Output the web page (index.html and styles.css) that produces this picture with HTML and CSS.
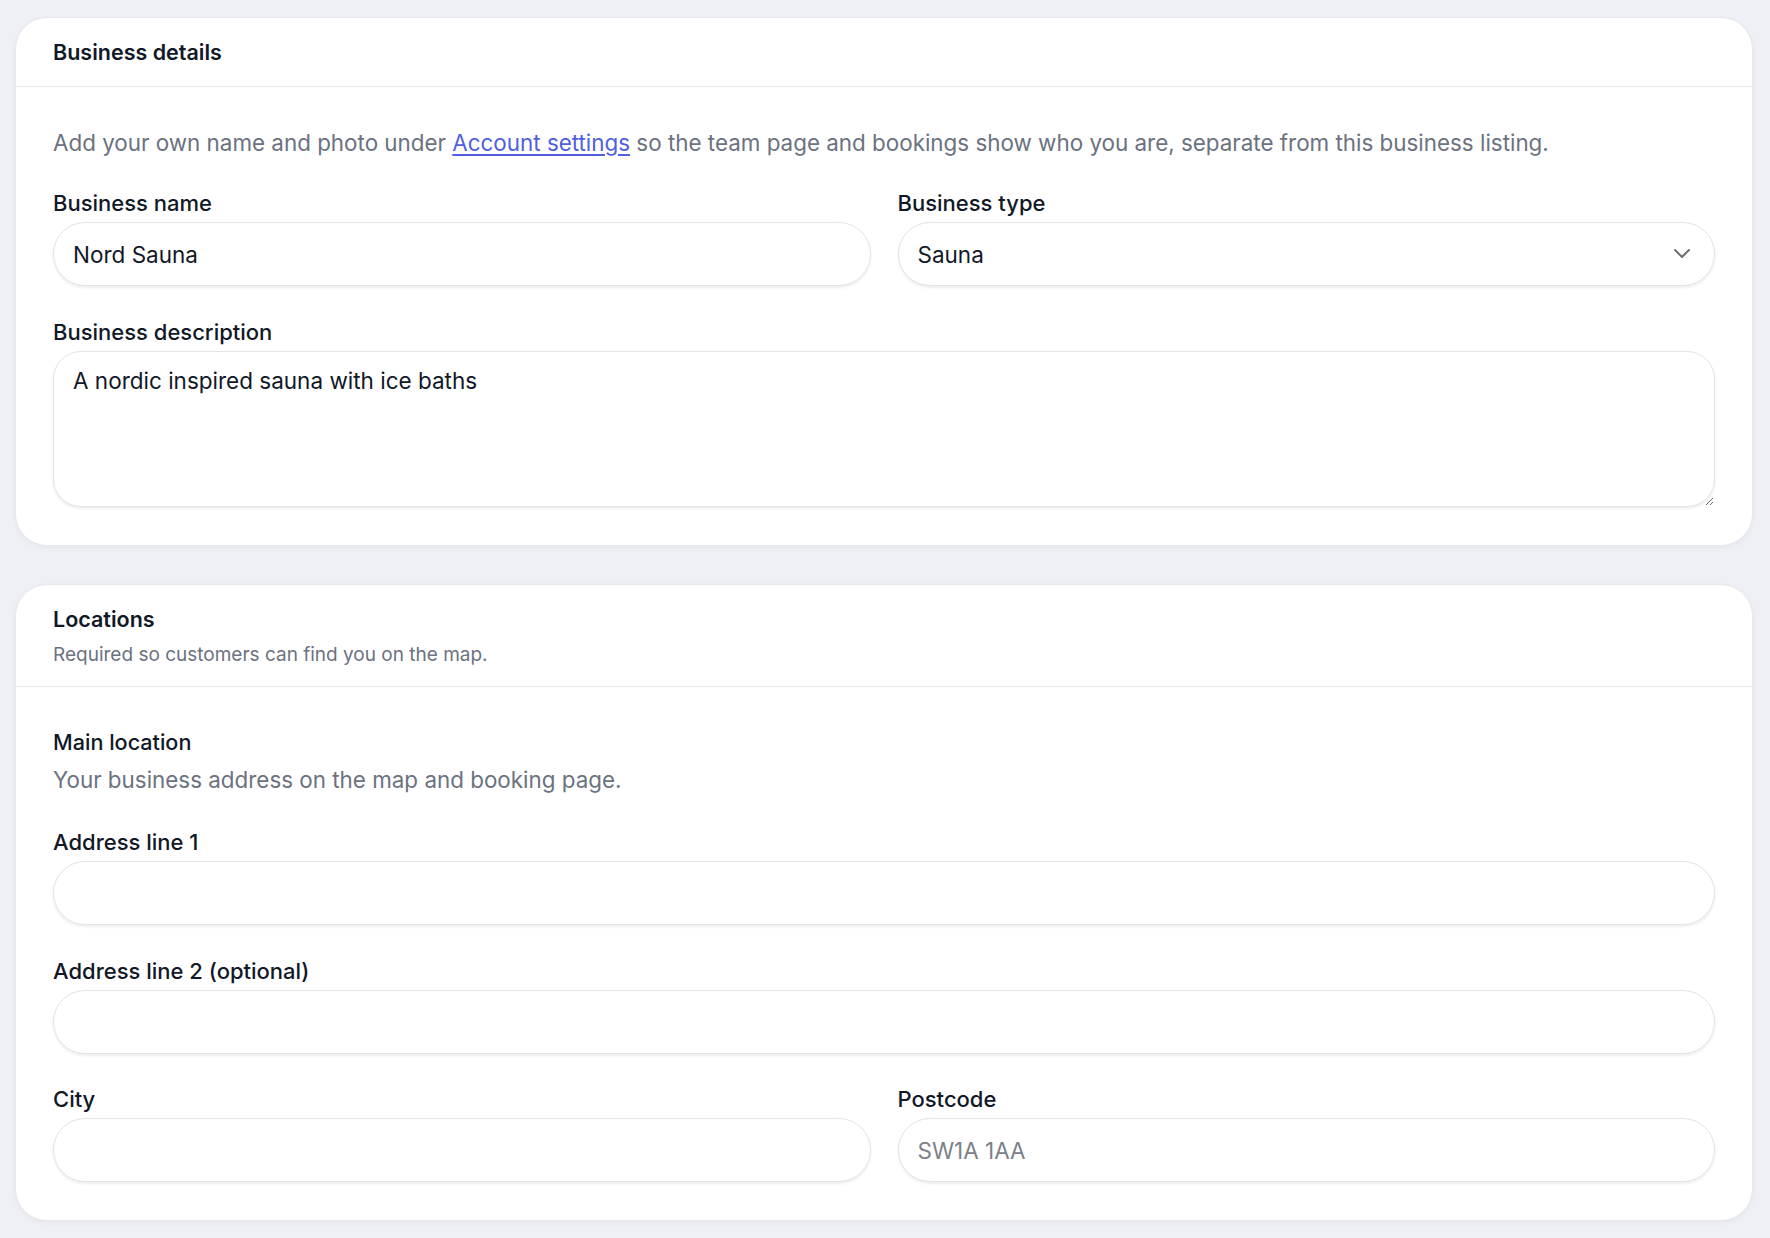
FILE: index.html
```html
<!DOCTYPE html>
<html lang="en">

<head>
    <meta charset="UTF-8">
    <meta name="viewport" content="width=device-width, initial-scale=1.0">
    <title>Business settings</title>
    <link rel="stylesheet" href="styles.css">
</head>

<body>
    <section class="card">
        <div class="card-header">
            <h2>Business details</h2>
        </div>
        <div class="card-body">
            <p class="hint">Add your own name and photo under <a href="#">Account settings</a> so the team page and bookings show who you are, separate from this business listing.</p>

            <div class="row">
                <div class="field">
                    <label for="bizName">Business name</label>
                    <input id="bizName" type="text" value="Nord Sauna">
                </div>
                <div class="field">
                    <label for="bizType">Business type</label>
                    <div class="select-wrap">
                        <select id="bizType">
                            <option>Sauna</option>
                            <option>Spa</option>
                            <option>Gym</option>
                        </select>
                        <svg class="chevron" width="24" height="24" viewBox="0 0 24 24" fill="none" stroke="currentColor" stroke-width="2" stroke-linecap="round" stroke-linejoin="round">
                            <path d="M5 9l7 7 7-7" />
                        </svg>
                    </div>
                </div>
            </div>

            <div class="field">
                <label for="bizDesc">Business description</label>
                <textarea id="bizDesc">A nordic inspired sauna with ice baths</textarea>
            </div>
        </div>
    </section>

    <section class="card">
        <div class="card-header tall">
            <h2>Locations</h2>
            <p class="sub">Required so customers can find you on the map.</p>
        </div>
        <div class="card-body loc">
            <h3>Main location</h3>
            <p class="hint small-gap">Your business address on the map and booking page.</p>

            <div class="field first">
                <label for="addr1">Address line 1</label>
                <input id="addr1" type="text">
            </div>
            <div class="field">
                <label for="addr2">Address line 2 (optional)</label>
                <input id="addr2" type="text">
            </div>
            <div class="row tight">
                <div class="field">
                    <label for="city">City</label>
                    <input id="city" type="text">
                </div>
                <div class="field">
                    <label for="postcode">Postcode</label>
                    <input id="postcode" type="text" placeholder="SW1A 1AA">
                </div>
            </div>
        </div>
    </section>
</body>

</html>
```

FILE: styles.css
```css
* {
    margin: 0;
    padding: 0;
    box-sizing: border-box;
}

body {
    background: #eff0f5;
    padding: 17px 17px 17px 15px;
    font-family: 'Inter', 'Liberation Sans', sans-serif;
    color: #111827;
    display: flex;
    flex-direction: column;
    gap: 38px;
}

.card {
    background: #fff;
    border: 1px solid #e6e7ec;
    border-radius: 32px;
    box-shadow: 0 2px 6px rgba(20, 24, 40, 0.04);
}

.card-header {
    padding: 20px 37px;
    border-bottom: 1px solid #e5e6ea;
}

.card-header.tall {
    padding-bottom: 19px;
}

.card-header h2 {
    font-size: 21.5px;
    line-height: 28px;
    font-weight: 600;
}

.sub {
    margin-top: 10px;
    font-size: 19px;
    line-height: 24px;
    color: #6b7280;
}

.card-body {
    padding: 42px 37px 38px;
}

.card-body.loc {
    padding-top: 41px;
}

.hint {
    font-size: 22.4px;
    line-height: 28px;
    color: #6b7280;
}

.hint a {
    color: #4f5fe0;
    text-decoration: underline;
    text-underline-offset: 3px;
}

h3 {
    font-size: 21.6px;
    line-height: 28px;
    font-weight: 500;
}

.hint.small-gap {
    margin-top: 10px;
}

.row {
    display: grid;
    grid-template-columns: 1fr 1fr;
    gap: 27px;
    margin-top: 32px;
}

.field {
    margin-top: 32px;
    display: flex;
    flex-direction: column;
}

.field.first {
    margin-top: 34px;
}

.row.tight {
    margin-top: 31px;
}

.row .field {
    margin-top: 0;
}

label {
    font-size: 22px;
    line-height: 28px;
    font-weight: 500;
    margin-bottom: 5px;
}

input,
select,
textarea {
    font-family: inherit;
    font-size: 22.5px;
    color: #111827;
    background: #fff;
    border: 1px solid #e3e4e8;
    box-shadow: 0 2px 3px rgba(0, 0, 0, 0.07);
    outline: none;
}

input,
select {
    height: 64px;
    border-radius: 32px;
    padding: 0 19px;
}

input::placeholder {
    color: #7c8089;
}

.select-wrap {
    position: relative;
}

select {
    width: 100%;
    appearance: none;
    -webkit-appearance: none;
}

.chevron {
    position: absolute;
    right: 21px;
    top: 19px;
    color: #6f6f6f;
    pointer-events: none;
}

textarea {
    height: 156px;
    border-radius: 28px;
    padding: 15px 19px;
    line-height: 28px;
    resize: vertical;
}
```
